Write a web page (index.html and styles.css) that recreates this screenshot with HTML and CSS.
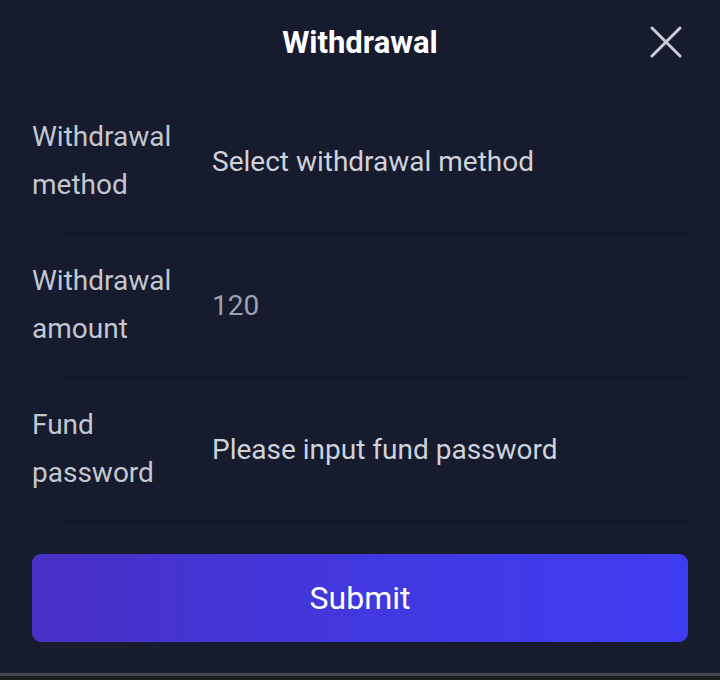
FILE: index.html
```html
<!DOCTYPE html>
<html lang="en">
<head>
    <meta charset="UTF-8">
    <meta name="viewport" content="width=device-width, initial-scale=1.0">
    <title>Withdrawal</title>
    <link rel="stylesheet" href="styles.css">
</head>
<body>
    <div class="sheet">
        <div class="header">
            <h1 class="title">Withdrawal</h1>
            <button class="close" aria-label="Close">
                <svg width="32" height="32" viewBox="0 0 32 32">
                    <path d="M2 2 L30 30 M30 2 L2 30" stroke="#c9ccd5" stroke-width="3" stroke-linecap="round"/>
                </svg>
            </button>
        </div>

        <div class="form">
            <div class="row">
                <div class="label">Withdrawal method</div>
                <div class="value">Select withdrawal method</div>
            </div>
            <div class="row">
                <div class="label">Withdrawal amount</div>
                <div class="value placeholder">120</div>
            </div>
            <div class="row">
                <div class="label">Fund password</div>
                <div class="value">Please input fund password</div>
            </div>
        </div>

        <div class="actions">
            <button class="submit">Submit</button>
        </div>
    </div>
    <div class="home-bar"></div>
</body>
</html>
```

FILE: styles.css
```css
body {
    margin: 0;
    height: 680px;
    display: flex;
    flex-direction: column;
    background-color: #161b2e;
    font-family: Roboto, "Noto Sans", Arial, sans-serif;
    overflow: hidden;
}
.sheet {
    flex: 1;
}
.header {
    position: relative;
    height: 84px;
    display: flex;
    justify-content: center;
    align-items: center;
}
.title {
    margin: 0;
    font-size: 31px;
    font-weight: 700;
    color: #ffffff;
}
.close {
    position: absolute;
    right: 38px;
    top: 26px;
    padding: 0;
    border: none;
    background: none;
    width: 32px;
    height: 32px;
    cursor: pointer;
}
.form {
    padding-top: 5px;
}
.row {
    display: flex;
    align-items: center;
    padding: 24px 32px;
    background: linear-gradient(#10152a, #10152a) no-repeat 64px 100% / calc(100% - 96px) 1px;
}
.label {
    width: 180px;
    flex-shrink: 0;
    padding-right: 30px;
    box-sizing: border-box;
    font-size: 28px;
    line-height: 48px;
    color: #c3c7d1;
}
.value {
    font-size: 28px;
    color: #cfd2da;
}
.value.placeholder {
    color: #9da1ad;
}
.actions {
    padding: 33px 32px 0;
}
.submit {
    width: 100%;
    height: 88px;
    border: none;
    border-radius: 9px;
    background: linear-gradient(90deg, #4a30c6, #4137dc 45%, #3e3cf2);
    color: #ffffff;
    font-family: inherit;
    font-size: 32px;
    cursor: pointer;
}
.home-bar {
    height: 7px;
    border-top: 3px solid #45484d;
    background-color: #1c1e22;
    box-sizing: border-box;
}
```
